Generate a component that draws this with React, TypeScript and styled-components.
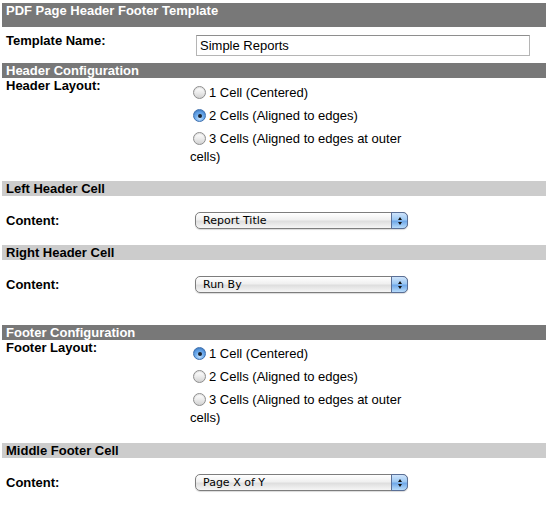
import React from 'react'
import styled, { createGlobalStyle } from 'styled-components'

const GlobalStyle = createGlobalStyle`
  body {
    margin: 0;
    background: #fff;
    font-family: "Liberation Sans", Arial, Helvetica, sans-serif;
    font-size: 13px;
    color: #000;
  }
`

const PageStyled = styled.div`
  padding: 3px 2px 0;
  width: 544px;
`

const TitleBarStyled = styled.div`
  height: 24px;
  padding-left: 4px;

  line-height: 15px;
  font-weight: bold;
  color: #fff;

  background-color: #787878;
`

const SectionBarStyled = styled.div<{ $tone: 'dark' | 'light' }>`
  height: 15px;
  padding-left: 4px;

  line-height: 15px;
  font-weight: bold;
  color: ${({ $tone }) => ($tone === 'dark' ? '#fff' : '#000')};

  background-color: ${({ $tone }) => ($tone === 'dark' ? '#787878' : '#cccccc')};
`

const RowStyled = styled.div<{ $height?: number; $center?: boolean }>`
  display: grid;
  grid-template-columns: 188px 1fr;

  align-items: ${({ $center }) => ($center ? 'center' : 'start')};

  height: ${({ $height }) => ($height ? `${$height}px` : 'auto')};
`

const LabelStyled = styled.div<{ $top?: number }>`
  padding-left: 4px;
  padding-top: ${({ $top }) => $top ?? 0}px;

  line-height: 15px;
  font-weight: bold;
`

const TextInputStyled = styled.input`
  box-sizing: border-box;
  width: 334px;
  height: 21px;
  margin: 8px 0 0 6px;
  padding: 0 3px;

  font-family: "Liberation Sans", Arial, sans-serif;
  font-size: 13px;
  color: #000;

  background: #fff;
  border: 1px solid #b5b5b5;
  border-top-color: #8e8e8e;
  outline: none;
`

const RadioGroupStyled = styled.div<{ $top: number }>`
  padding: ${({ $top }) => $top}px 0 ${({ $top }) => 21 - $top}px;
`

const RadioOptionStyled = styled.div`
  width: 216px;
  margin-bottom: 5px;

  line-height: 18px;

  &:last-child {
    margin-bottom: 0;
  }
`

const RadioDotStyled = styled.span<{ $checked?: boolean }>`
  position: relative;

  display: inline-block;
  box-sizing: border-box;
  width: 13px;
  height: 13px;
  margin: 0 3px 0 3px;

  vertical-align: -2px;

  border-radius: 50%;
  border: 1px solid ${({ $checked }) => ($checked ? '#3d6fae' : '#8d8d8d')};
  background: ${({ $checked }) =>
    $checked
      ? 'radial-gradient(circle at 50% 75%, #bfe0ff 0%, #6aa8ea 45%, #3f84d6 100%)'
      : 'linear-gradient(#ffffff 0%, #eeeeee 45%, #d2d2d2 100%)'};
  box-shadow: inset 0 1px 1px rgba(0, 0, 0, 0.12);

  &::after {
    content: '';
    position: absolute;
    top: 3.5px;
    left: 3.5px;

    display: ${({ $checked }) => ($checked ? 'block' : 'none')};
    width: 4px;
    height: 4px;

    border-radius: 50%;
    background: #1b2430;
  }
`

const SelectStyled = styled.div`
  position: relative;

  box-sizing: border-box;
  width: 213px;
  height: 17px;
  margin-left: 5px;
  padding-left: 7px;

  font-family: "DejaVu Sans", "Lucida Grande", sans-serif;
  font-size: 11px;
  line-height: 15px;

  border: 1px solid #7d7d7d;
  border-radius: 5px;
  background: linear-gradient(#ffffff 0%, #f0f0f0 45%, #dedede 55%, #f6f6f6 100%);
  box-shadow: 0 1px 1px rgba(0, 0, 0, 0.15);
`

const StepperStyled = styled.span`
  position: absolute;
  top: -1px;
  right: -1px;

  display: flex;
  flex-direction: column;
  gap: 2px;
  align-items: center;
  justify-content: center;

  box-sizing: border-box;
  width: 17px;
  height: 17px;

  border: 1px solid #5a6f96;
  border-radius: 0 5px 5px 0;
  background: linear-gradient(#cfe4fb 0%, #9cc8f3 45%, #6fa8e8 55%, #b8dcfb 100%);
`

const TriangleStyled = styled.span<{ $down?: boolean }>`
  width: 0;
  height: 0;

  border-left: 2.5px solid transparent;
  border-right: 2.5px solid transparent;
  ${({ $down }) =>
    $down ? 'border-top: 3px solid #111;' : 'border-bottom: 3px solid #111;'}
`

const SpacerStyled = styled.div`
  height: 16px;
`

type RadioChoice = { text: string; checked?: boolean }

const RadioGroup = ({ choices, top }: { choices: RadioChoice[]; top: number }) => (
  <RadioGroupStyled $top={top}>
    {choices.map((choice) => (
      <RadioOptionStyled key={choice.text}>
        <RadioDotStyled $checked={choice.checked} />
        {choice.text}
      </RadioOptionStyled>
    ))}
  </RadioGroupStyled>
)

const SelectRow = ({ value }: { value: string }) => (
  <RowStyled $height={49} $center>
    <LabelStyled>Content:</LabelStyled>
    <SelectStyled>
      {value}
      <StepperStyled>
        <TriangleStyled />
        <TriangleStyled $down />
      </StepperStyled>
    </SelectStyled>
  </RowStyled>
)

const App = () => {
  return (
    <>
      <GlobalStyle />
      <PageStyled>
        <TitleBarStyled>PDF Page Header Footer Template</TitleBarStyled>

        <RowStyled $height={36}>
          <LabelStyled $top={6}>Template Name:</LabelStyled>
          <TextInputStyled defaultValue="Simple Reports" />
        </RowStyled>

        <SectionBarStyled $tone="dark">Header Configuration</SectionBarStyled>
        <RowStyled>
          <LabelStyled>Header Layout:</LabelStyled>
          <RadioGroup
            top={6}
            choices={[
              { text: '1 Cell (Centered)' },
              { text: '2 Cells (Aligned to edges)', checked: true },
              { text: '3 Cells (Aligned to edges at outer cells)' },
            ]}
          />
        </RowStyled>

        <SectionBarStyled $tone="light">Left Header Cell</SectionBarStyled>
        <SelectRow value="Report Title" />

        <SectionBarStyled $tone="light">Right Header Cell</SectionBarStyled>
        <SelectRow value="Run By" />
        <SpacerStyled />

        <SectionBarStyled $tone="dark">Footer Configuration</SectionBarStyled>
        <RowStyled>
          <LabelStyled>Footer Layout:</LabelStyled>
          <RadioGroup
            top={5}
            choices={[
              { text: '1 Cell (Centered)', checked: true },
              { text: '2 Cells (Aligned to edges)' },
              { text: '3 Cells (Aligned to edges at outer cells)' },
            ]}
          />
        </RowStyled>

        <SectionBarStyled $tone="light">Middle Footer Cell</SectionBarStyled>
        <SelectRow value="Page X of Y" />
      </PageStyled>
    </>
  )
}

export default App
